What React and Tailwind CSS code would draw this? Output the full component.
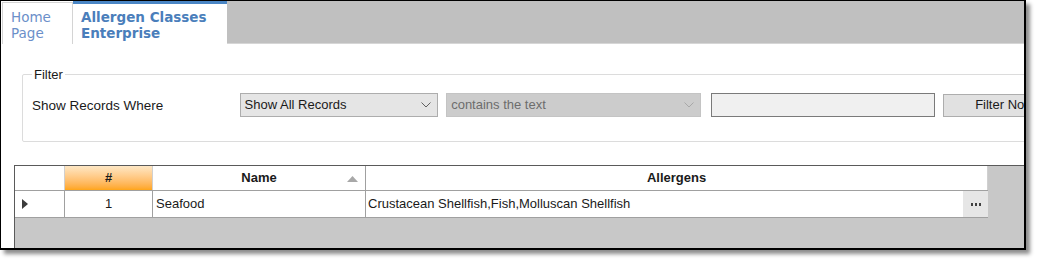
import React from 'react'

function Chevron({ color = '#606060' }) {
  return (
    <svg width="10" height="6" viewBox="0 0 10 6" fill="none">
      <path d="M0.5 0.5 L5 5 L9.5 0.5" stroke={color} strokeWidth="1" />
    </svg>
  )
}

function Combo({ text, width, disabled }) {
  return (
    <div
      className={`h-[24px] ${width} flex items-center justify-between pl-[4px] pr-[6px] border ${
        disabled ? 'bg-[#cccccc] border-[#c4c4c4] text-[#6d6d6d]' : 'bg-[#e5e5e5] border-[#adadad] text-[#1a1a1a]'
      }`}
    >
      <span>{text}</span>
      <Chevron color={disabled ? '#a8a8a8' : '#606060'} />
    </div>
  )
}

export default function App() {
  return (
    <div className="w-[1040px] h-[264px] bg-white">
      <div className="w-[1026px] h-[250px] bg-white border-l border-t border-black border-r-2 border-b-2 shadow-[4px_4px_4px_rgba(0,0,0,0.45)] overflow-hidden flex flex-col">
        {/* tab strip */}
        <div className="h-[43px] flex font-['DejaVu_Sans',sans-serif] text-[13.5px] leading-[16px] shrink-0">
          <div className="pl-[1px] pt-[1px] bg-white">
            <div className="w-[71px] h-[42px] border border-b-0 border-[#d4d4d4] pl-[8px] pt-[6px] text-[#6b8fc9]">
              Home
              <br />
              Page
            </div>
          </div>
          <div className="w-[154px] bg-white border-t-[3px] border-[#4a86c5] pl-[8px] pt-[5px] font-bold text-[#4a7ebb]">
            Allergen Classes
            <br />
            Enterprise
          </div>
          <div className="flex-1 bg-[#c0c0c0] border-b border-[#d6d6d6]" />
        </div>

        {/* content */}
        <div className="flex-1 flex flex-col font-['Liberation_Sans',sans-serif] text-[13px] text-[#1a1a1a]">
          {/* filter group */}
          <div className="mt-[30px] ml-[21px] mr-[-20px] h-[68px] border border-[#dcdcdc] rounded-[2px] relative">
            <span className="absolute left-[9px] top-[-8px] bg-white px-[2px] leading-[16px]">Filter</span>
            <div className="flex items-center mt-[18px] ml-[9px]">
              <span className="w-[208px] text-[13.5px] pt-[2px]">Show Records Where</span>
              <Combo text="Show All Records" width="w-[199px]" />
              <div className="w-[8px]" />
              <Combo text="contains the text" width="w-[255px]" disabled />
              <div className="w-[10px]" />
              <div className="w-[225px] h-[24px] bg-[#f0f0f0] border border-[#7a7a7a]" />
              <div className="w-[8px]" />
              <div className="w-[100px] h-[23px] bg-[#e1e1e1] border border-[#adadad] flex items-center pl-[31px] whitespace-nowrap">
                Filter Now
              </div>
            </div>
          </div>

          {/* grid */}
          <div className="mt-[23px] ml-[13px] flex-1 bg-[#c8c8c8] border-l border-t border-[#5a5a5a] flex flex-col">
            <div className="flex h-[25px] w-fit border-b border-[#a0a0a0] bg-white">
              <div className="w-[50px] border-r border-[#d0d0d0]" />
              <div className="w-[88px] border-r border-[#d0d0d0] bg-gradient-to-b from-[#fde7c4] to-[#ffa514] flex items-center justify-center font-bold">
                #
              </div>
              <div className="w-[213px] border-r border-[#a0a0a0] relative flex items-center justify-center font-bold">
                Name
                <svg className="absolute right-[7px] top-[10px]" width="11" height="6" viewBox="0 0 11 6">
                  <path d="M0 6 L5.5 0 L11 6 Z" fill="#a8a8a8" />
                </svg>
              </div>
              <div className="w-[622px] border-r border-[#d0d0d0] flex items-center justify-center font-bold">
                Allergens
              </div>
            </div>
            <div className="flex h-[27px] bg-white w-fit border-b border-[#a0a0a0]">
              <div className="w-[50px] border-r border-[#a0a0a0] flex items-center pl-[7px]">
                <svg width="6" height="10" viewBox="0 0 6 10">
                  <path d="M0 0 L6 5 L0 10 Z" fill="#3c3c3c" />
                </svg>
              </div>
              <div className="w-[88px] border-r border-[#a0a0a0] flex items-center justify-center">1</div>
              <div className="w-[213px] border-r border-[#a0a0a0] flex items-center pl-[3px]">Seafood</div>
              <div className="w-[622px] flex items-center justify-between pl-[2px]">
                <span>Crustacean Shellfish,Fish,Molluscan Shellfish</span>
                <div className="w-[25px] h-full bg-[#e6e6e6] flex items-center justify-center">
                  <span className="flex gap-[2px]">
                    <span className="w-[2px] h-[3px] bg-[#404040]" />
                    <span className="w-[2px] h-[3px] bg-[#404040]" />
                    <span className="w-[2px] h-[3px] bg-[#404040]" />
                  </span>
                </div>
              </div>
            </div>
          </div>
        </div>
      </div>
    </div>
  )
}
